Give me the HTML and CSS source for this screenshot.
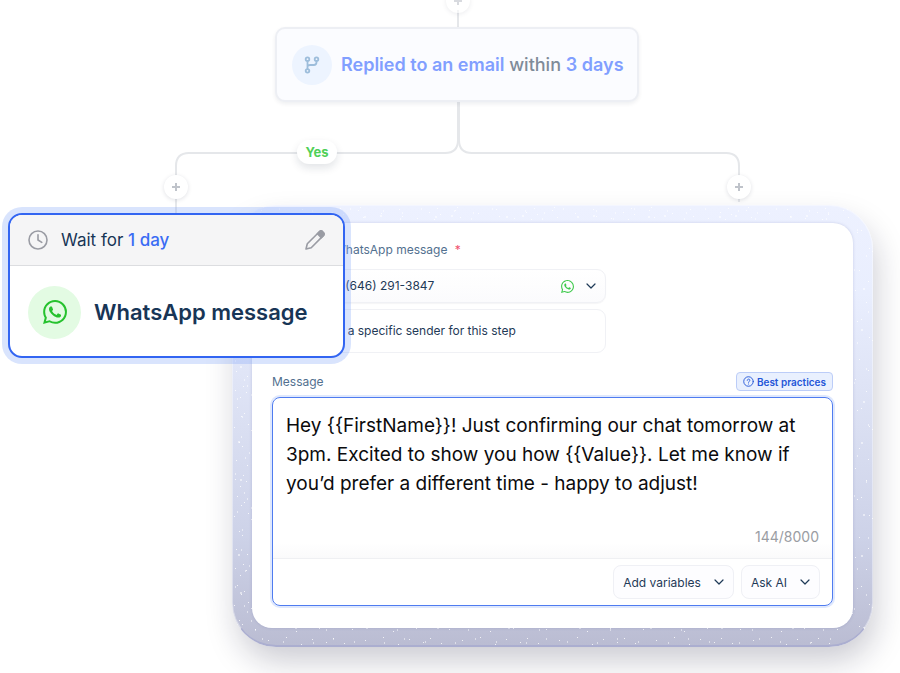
FILE: index.html
```
<!DOCTYPE html>
<html lang="en">

<head>
    <meta charset="utf-8">
    <title>WhatsApp message step</title>
    <link rel="stylesheet" href="styles.css">
</head>

<body>
    <svg class="sprite" aria-hidden="true">
        <symbol id="whatsapp" viewBox="0 0 24 24">
            <path fill="currentColor" d="M17.472 14.382c-.297-.149-1.758-.867-2.03-.967-.273-.099-.471-.148-.67.15-.197.297-.767.966-.94 1.164-.173.199-.347.223-.644.075-.297-.15-1.255-.463-2.39-1.475-.883-.788-1.48-1.761-1.653-2.059-.173-.297-.018-.458.13-.606.134-.133.298-.347.446-.52.149-.174.198-.298.298-.497.099-.198.05-.371-.025-.52-.075-.149-.669-1.612-.916-2.207-.242-.579-.487-.5-.669-.51-.173-.008-.371-.01-.57-.01-.198 0-.52.074-.792.372-.272.297-1.04 1.016-1.04 2.479 0 1.462 1.065 2.875 1.213 3.074.149.198 2.096 3.2 5.077 4.487.709.306 1.262.489 1.694.625.712.227 1.36.195 1.871.118.571-.085 1.758-.719 2.006-1.413.248-.694.248-1.289.173-1.413-.074-.124-.272-.198-.57-.347m-5.421 7.403h-.004a9.87 9.87 0 01-5.031-1.378l-.361-.214-3.741.982.998-3.648-.235-.374a9.86 9.86 0 01-1.51-5.26c.001-5.45 4.436-9.884 9.888-9.884 2.64 0 5.122 1.03 6.988 2.898a9.825 9.825 0 012.893 6.994c-.003 5.45-4.437 9.884-9.885 9.884m8.413-18.297A11.815 11.815 0 0012.05 0C5.495 0 .16 5.335.157 11.892c0 2.096.547 4.142 1.588 5.945L.057 24l6.305-1.654a11.882 11.882 0 005.683 1.448h.005c6.554 0 11.89-5.335 11.893-11.893a11.821 11.821 0 00-3.48-8.413z" />
        </symbol>
        <symbol id="chevron" viewBox="0 0 10 6">
            <path d="M1 1l4 4 4-4" fill="none" stroke="currentColor" stroke-width="1.2" stroke-linecap="round" stroke-linejoin="round" />
        </symbol>
        <symbol id="plus" viewBox="0 0 10 10">
            <path d="M5 1v8M1 5h8" fill="none" stroke="currentColor" stroke-width="2" />
        </symbol>
    </svg>

    <main class="stage">
        <section class="flow">
            <svg class="lines" width="740" height="216" viewBox="0 0 740 216">
                <path d="M458 10v18M458 100v40q0 13-13 13H189q-13 0-13 13v48" />
                <path d="M459 100v40q0 13 13 13h254q13 0 13 13v36" />
            </svg>
            <button class="add add-top" aria-label="Add step"><svg><use href="#plus" /></svg></button>
            <div class="node">
                <span class="node-icon">
                    <svg viewBox="0 0 16 20" fill="none" stroke="currentColor" stroke-width="2">
                        <circle cx="3" cy="3.500" r="2" />
                        <circle cx="13" cy="3.500" r="2" />
                        <circle cx="3" cy="16.500" r="2" />
                        <path d="M3 5.500v9M13 5.500v1.500q0 3-3 3H6q-3 0-3 2" />
                    </svg>
                </span>
                <span class="node-text"><b>Replied to an email</b> within <b>3 days</b></span>
            </div>
            <span class="yes">Yes</span>
            <button class="add add-left" aria-label="Add step"><svg><use href="#plus" /></svg></button>
            <button class="add add-right" aria-label="Add step"><svg><use href="#plus" /></svg></button>
        </section>

        <section class="panel">
            <form class="panel-body">
                <div class="sender">
                    <label class="label sender-label" for="phone">WhatsApp message <i>*</i></label>
                    <div class="phone">
                        <select id="phone">
                            <option>+1 (646) 291-3847</option>
                        </select>
                        <span class="phone-icons">
                            <svg class="wa-small"><use href="#whatsapp" /></svg>
                            <svg class="chevron"><use href="#chevron" /></svg>
                        </span>
                    </div>
                    <label class="specific">
                        <input type="checkbox">
                        <span>Use a specific sender for this step</span>
                    </label>
                </div>

                <div class="message-head">
                    <label class="label" for="message">Message</label>
                    <a class="best" href="#">
                        <svg viewBox="0 0 12 12" fill="none" stroke="currentColor" stroke-linecap="round">
                            <circle cx="6" cy="6" r="5.200" />
                            <path d="M4.600 4.700c0-1.800 2.900-1.800 2.900 0 0 1.100-1.500 1.100-1.500 2.200M6 8.700v.1" />
                        </svg>
                        Best practices
                    </a>
                </div>

                <div class="editor">
                    <textarea id="message" rows="3" spellcheck="false">Hey {{FirstName}}! Just confirming our chat tomorrow at 3pm. Excited to show you how {{Value}}. Let me know if you’d prefer a different time - happy to adjust!</textarea>
                    <div class="count">144/8000</div>
                    <div class="tools">
                        <button type="button">Add variables <svg class="chevron"><use href="#chevron" /></svg></button>
                        <button type="button">Ask AI <svg class="chevron"><use href="#chevron" /></svg></button>
                    </div>
                </div>
            </form>
        </section>

        <article class="step">
            <header class="step-head">
                <svg class="clock" viewBox="0 0 20 20" fill="none" stroke="currentColor" stroke-width="1.600" stroke-linecap="round" stroke-linejoin="round">
                    <circle cx="10" cy="10" r="9" />
                    <path d="M10 4.800V10l3.800 2.400" />
                </svg>
                <span class="wait">Wait for <b>1 day</b></span>
                <button class="edit" aria-label="Edit delay">
                    <svg viewBox="0 0 20 20" fill="none" stroke="currentColor" stroke-width="1.600" stroke-linejoin="round">
                        <path d="M1 19l1.300-5.200L14.600 1.500q1.400-1.200 2.900.2l.8.800q1.400 1.500.2 2.900L6.200 17.700z" />
                        <path d="M12.400 3.700l2.200-2.200q1.400-1.200 2.900.2l.8.800q1.400 1.500.2 2.900l-2.200 2.200z" fill="currentColor" />
                    </svg>
                </button>
            </header>
            <div class="step-body">
                <span class="wa-circle"><svg><use href="#whatsapp" /></svg></span>
                <h2>WhatsApp message</h2>
            </div>
        </article>
    </main>
</body>

</html>
```

FILE: styles.css
```
* {
    box-sizing: border-box;
}

body {
    margin: 0;
    background: #fff;
    font-family: Inter, "Liberation Sans", sans-serif;
    font-size: 12px;
    color: #1f3a57;
}

button,
select,
textarea {
    margin: 0;
    padding: 0;
    border: 0;
    background: none;
    font: inherit;
    color: inherit;
}

svg {
    display: block;
}

.sprite {
    display: none;
}

.stage {
    position: relative;
    overflow: hidden;
    padding-bottom: 26px;
}

/* flow canvas */
.flow {
    position: relative;
    height: 205px;
}

.lines {
    position: absolute;
    left: 0;
    top: 0;
    fill: none;
    stroke: #e5e7ea;
    stroke-width: 2;
}

.node {
    position: absolute;
    left: 275px;
    top: 27px;
    display: flex;
    align-items: center;
    gap: 9px;
    width: 364px;
    height: 75px;
    padding: 0 15px;
    border: 2px solid #edeff4;
    border-radius: 10px;
    background: #fbfcff;
    box-shadow: 0 2px 4px rgba(20, 30, 60, 0.07);
}

.node-icon {
    flex: none;
    display: flex;
    align-items: center;
    justify-content: center;
    width: 40px;
    height: 40px;
    border-radius: 50%;
    background: #edf4ff;
    color: #9dbddb;
}

.node-icon svg {
    width: 16px;
    height: 18px;
}

.node-text {
    font-size: 18px;
    font-weight: 500;
    color: #7f8b99;
    white-space: nowrap;
}

.node-text b {
    font-weight: 600;
    color: #819fff;
}

.yes {
    position: absolute;
    left: 297px;
    top: 140px;
    width: 40px;
    border-radius: 12px;
    background: #fff;
    box-shadow: 0 4px 8px rgba(20, 30, 60, 0.12);
    font-size: 13px;
    font-weight: 700;
    line-height: 24px;
    text-align: center;
    color: #4fd058;
}

.add {
    position: absolute;
    display: flex;
    align-items: center;
    justify-content: center;
    width: 24px;
    height: 24px;
    border-radius: 50%;
    background: #fff;
    box-shadow: 0 1px 4px rgba(20, 30, 60, 0.13);
    color: #bfc3ca;
}

.add svg {
    width: 10px;
    height: 10px;
}

.add-top {
    left: 446px;
    top: -11px;
    opacity: 0.6;
}

.add-left {
    left: 164px;
    top: 175px;
}

.add-right {
    left: 727px;
    top: 175px;
}

/* message panel, with white specks over the gradient */
.panel {
    margin: 0 27px 0 232px;
    padding: 17px 19px;
    border: 1px solid rgba(255, 255, 255, 0.4);
    border-bottom: 2px solid #abaed0;
    border-radius: 44px;
    background:
        url("data:image/svg+xml,%3Csvg xmlns='http://www.w3.org/2000/svg' width='97' height='89'%3E%3Cpath stroke='white' stroke-opacity='.8' d='M3 7.5h1M11 3.5h1M14 9.500h1M8 14.500h1M29 5.500h1M34 12.500h1M31 2.500h1M52 8.500h1M70 4.500h1M73 11.500h1M88 13.500h1M5 24.500h1M12 30.500h1M9 33.500h1M25 21.500h1M43 27.500h1M47 25.500h1M62 19.500h1M66 33.500h1M81 28.500h1M93 22.500h1M2 44.500h1M16 41.500h1M19 47.500h1M33 38.500h1M38 52.500h1M55 43.500h1M58 46.500h1M75 40.500h1M78 51.500h1M90 45.500h1M7 59.500h1M10 63.500h1M23 68.500h1M28 57.500h1M45 65.500h1M60 61.500h1M64 70.500h1M84 58.500h1M87 67.500h1M4 77.500h1M15 82.500h1M36 79.500h1M41 85.500h1M54 76.500h1M69 83.500h1M80 78.500h1M94 81.500h1'/%3E%3C/svg%3E"),
        url("data:image/svg+xml,%3Csvg xmlns='http://www.w3.org/2000/svg' width='71' height='113'%3E%3Cpath stroke='white' stroke-width='2' stroke-opacity='.5' d='M6 11h2M9 6h1M26 14h1M28 8h1M47 4h1M61 12h2M13 27h1M17 22h1M39 31h2M57 25h1M3 43h1M8 49h2M22 39h1M45 47h1M50 42h1M66 51h1M12 62h1M15 68h1M33 58h2M54 65h1M5 81h1M19 77h1M23 86h1M42 79h1M63 84h2M10 99h1M30 95h1M36 104h1M51 98h1M68 107h1'/%3E%3C/svg%3E"),
        linear-gradient(#edf1ff 0%, #e9eefe 20%, #dadff2 50%, #cdd2e8 75%, #babcd2 100%);
    background-origin: border-box;
    box-shadow: 4px 16px 32px -2px rgba(20, 20, 50, 0.22);
}

.panel-body {
    padding: 18px 20px 22px;
    border-radius: 20px;
    background: #fff;
    box-shadow: 0 0 3px rgba(90, 100, 160, 0.25);
}

.sender {
    display: flex;
    flex-direction: column;
    gap: 6px;
    max-width: 334px;
}

.label {
    font-size: 12px;
    line-height: 18px;
    color: #52708f;
}

.sender-label {
    padding-left: 62px;
    margin-bottom: 4px;
}

.label i {
    margin-left: 4px;
    font-style: normal;
    color: #f0506e;
}

.phone {
    display: grid;
    align-items: center;
    height: 34px;
    border: 1px solid #f0f1f5;
    border-radius: 9px;
    background: linear-gradient(#fff, #fbfbfd);
    box-shadow: 0 1px 1px rgba(20, 30, 60, 0.04);
}

.phone select,
.phone-icons {
    grid-area: 1 / 1;
}

.phone select {
    appearance: none;
    height: 32px;
    padding: 0 56px 2px;
}

.phone-icons {
    display: flex;
    align-items: center;
    justify-content: flex-end;
    gap: 12px;
    padding-right: 9px;
    pointer-events: none;
}

.wa-small {
    width: 13px;
    height: 13px;
    color: #3cc94a;
}

.chevron {
    width: 10px;
    height: 6px;
    color: #1f3a57;
}

.specific {
    display: flex;
    align-items: center;
    gap: 8px;
    height: 44px;
    padding: 0 0 2px 27px;
    border: 1px solid #f0f1f5;
    border-radius: 9px;
}

.specific input {
    width: 14px;
    height: 14px;
    margin: 0;
}

.message-head {
    display: flex;
    align-items: center;
    justify-content: space-between;
    margin: 19px 0 6px;
}

.best {
    display: flex;
    align-items: center;
    gap: 3px;
    height: 19px;
    padding: 0 6px;
    border: 1px solid #bccdf8;
    border-radius: 4px;
    background: #e9f0fe;
    font-size: 10px;
    font-weight: 600;
    color: #2456d8;
    text-decoration: none;
}

.best svg {
    width: 11px;
    height: 11px;
}

.editor {
    border: 1px solid #4f7cf0;
    border-radius: 8px;
    box-shadow: 0 0 0 2px #dfe8fd;
}

.editor textarea {
    display: block;
    width: 100%;
    height: 100px;
    padding: 13px 13px 0;
    outline: 0;
    overflow: hidden;
    resize: none;
    font-size: 19px;
    line-height: 29px;
    color: #0b0b0d;
}

.count {
    padding: 28px 13px 11px;
    background: linear-gradient(#fff 75%, #fafafb);
    font-size: 14px;
    line-height: 21px;
    text-align: right;
    color: #9a9da3;
}

.tools {
    display: flex;
    justify-content: flex-end;
    gap: 7px;
    padding: 6px 12px;
    border-top: 1px solid #eff0f3;
}

.tools button {
    display: flex;
    align-items: center;
    gap: 13px;
    height: 34px;
    padding: 0 9px;
    border: 1px solid #eff0f5;
    border-radius: 8px;
    background: #fdfdff;
}

/* selected step card */
.step {
    position: absolute;
    left: 8px;
    top: 213px;
    width: 337px;
    overflow: hidden;
    border: 2px solid #3265f2;
    border-radius: 14px;
    background: #fff;
    box-shadow: 0 0 0 6px rgba(128, 164, 250, 0.3);
}

.step-head {
    display: flex;
    align-items: center;
    gap: 13px;
    height: 51px;
    padding: 0 18px;
    border-bottom: 1px solid #dcdde0;
    background: #f5f5f6;
    color: #9a9ca4;
}

.clock,
.edit svg {
    width: 20px;
    height: 20px;
}

.wait {
    flex: 1;
    font-size: 17px;
    font-weight: 400;
    color: #183556;
}

.wait b {
    font-weight: 500;
    color: #3a6cf4;
}

.step-body {
    display: flex;
    align-items: center;
    gap: 13px;
    height: 90px;
    padding: 2px 18px 0;
}

.wa-circle {
    flex: none;
    display: flex;
    align-items: center;
    justify-content: center;
    width: 53px;
    height: 53px;
    border-radius: 50%;
    background: #e3fbe3;
    color: #26c22e;
}

.wa-circle svg {
    width: 24px;
    height: 24px;
}

.step-body h2 {
    margin: 0;
    font-size: 22px;
    font-weight: 600;
    color: #183556;
    white-space: nowrap;
}
```
